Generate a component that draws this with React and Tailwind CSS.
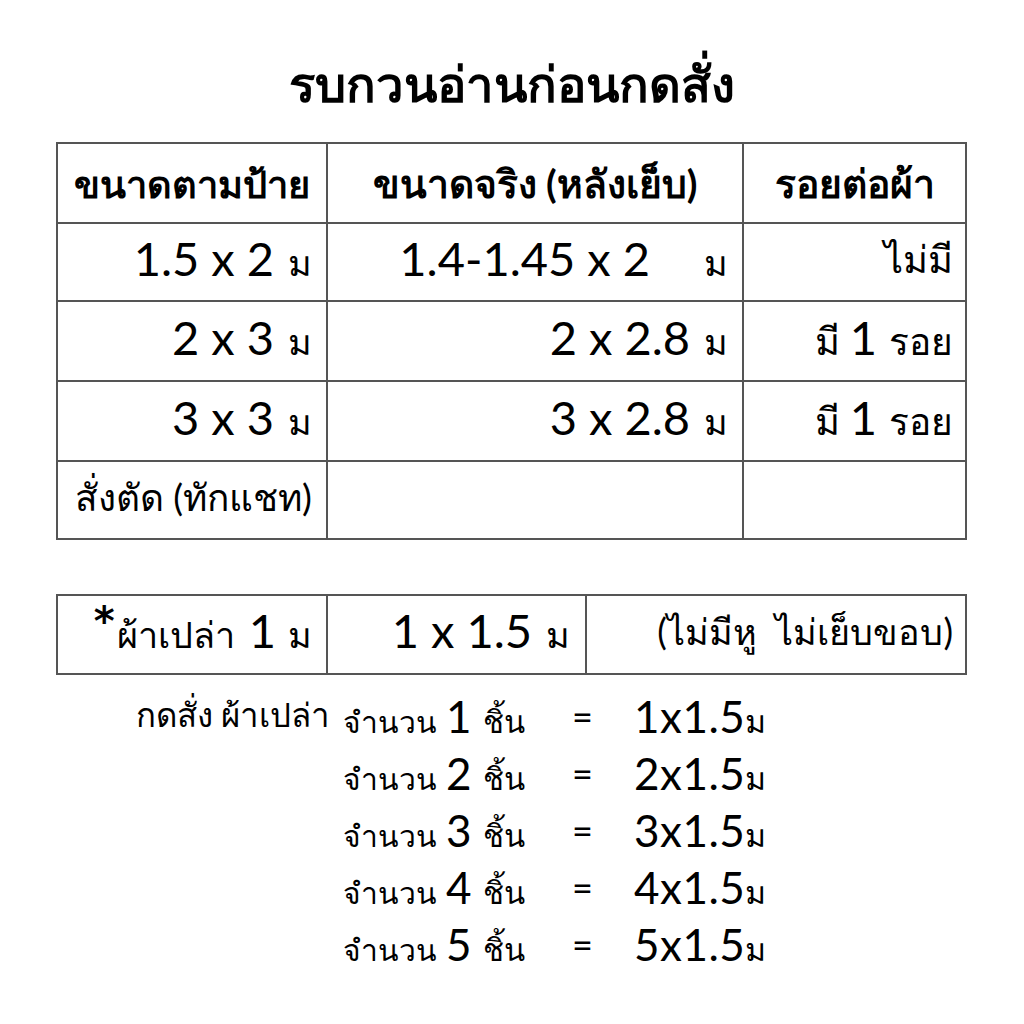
const F = { fontFamily: "Lato, 'Noto Sans', sans-serif" };

function Big({ children, className = "" }) {
  return <span className={"text-[47px] leading-none " + className}>{children}</span>;
}
function Th({ children, className = "" }) {
  return <span className={"leading-none " + className}>{children}</span>;
}

const cell = "border-r-2 border-b-2 border-[#555] flex items-center";
const dcell = cell + " justify-end pb-[8px]";

export default function App() {
  return (
    <div className="w-[1024px] h-[1024px] bg-white text-black pt-[46px]" style={F}>
      <h1 className="h-[74px] flex items-center justify-center text-[49px] font-bold leading-none">
        รบกวนอ่านก่อนกดสั่ง
      </h1>

      {/* Table 1 */}
      <div className="ml-[56px] mt-[22px] w-[911px] border-l-2 border-t-2 border-[#555]">
        <div className="grid grid-cols-[270px_416px_223px] h-[80px]">
          <div className={cell + " justify-center text-[38px] font-bold"}>ขนาดตามป้าย</div>
          <div className={cell + " justify-center text-[39px] font-bold"}>ขนาดจริง (หลังเย็บ)</div>
          <div className={cell + " justify-center text-[39px] font-bold"}>รอยต่อผ้า</div>
        </div>
        <div className="grid grid-cols-[270px_416px_223px] h-[78px]">
          <div className={dcell + " pr-[14px]"}>
            <span className="flex items-baseline gap-[14px]">
              <Big>1.5 x 2</Big>
              <Th className="text-[36px]">ม</Th>
            </span>
          </div>
          <div className={dcell + " pr-[14px]"}>
            <span className="flex items-baseline gap-[54px]">
              <Big>1.4-1.45 x 2</Big>
              <Th className="text-[36px]">ม</Th>
            </span>
          </div>
          <div className={dcell + " pr-[12px]"}>
            <Th className="text-[38px]">ไม่มี</Th>
          </div>
        </div>
        {[
          ["2 x 3", "2 x 2.8"],
          ["3 x 3", "3 x 2.8"],
        ].map(([a, b]) => (
          <div key={a} className="grid grid-cols-[270px_416px_223px] h-[80px]">
            <div className={dcell + " pr-[14px]"}>
              <span className="flex items-baseline gap-[14px]">
                <Big>{a}</Big>
                <Th className="text-[36px]">ม</Th>
              </span>
            </div>
            <div className={dcell + " pr-[14px]"}>
              <span className="flex items-baseline gap-[14px]">
                <Big>{b}</Big>
                <Th className="text-[36px]">ม</Th>
              </span>
            </div>
            <div className={dcell + " pr-[12px]"}>
              <span className="flex items-baseline">
                <Th className="text-[38px]">มี</Th>
                <Big className="ml-[10px]">1</Big>
                <Th className="text-[37px] ml-[12px]">รอย</Th>
              </span>
            </div>
          </div>
        ))}
        <div className="grid grid-cols-[270px_416px_223px] h-[78px]">
          <div className={dcell + " pr-[14px]"}>
            <Th className="text-[37px]">สั่งตัด (ทักแชท)</Th>
          </div>
          <div className={cell} />
          <div className={cell} />
        </div>
      </div>

      {/* Table 2 */}
      <div className="ml-[56px] mt-[54px] w-[911px] border-l-2 border-t-2 border-[#555]">
        <div className="grid grid-cols-[270px_259px_380px] h-[79px]">
          <div className={dcell + " pr-[14px]"}>
            <span className="flex items-baseline">
              <span
                className="text-[40px] font-bold leading-none self-start -mt-[6px] mr-[2px]"
                style={{ fontFamily: "'DejaVu Sans', sans-serif" }}
              >
                *
              </span>
              <Th className="text-[36px]">ผ้าเปล่า</Th>
              <Big className="ml-[14px]">1</Big>
              <Th className="text-[36px] ml-[12px]">ม</Th>
            </span>
          </div>
          <div className={dcell + " pr-[15px]"}>
            <span className="flex items-baseline gap-[14px]">
              <Big>1 x 1.5</Big>
              <Th className="text-[36px]">ม</Th>
            </span>
          </div>
          <div className={dcell + " pr-[12px]"}>
            <Th className="text-[36px] whitespace-pre">(ไม่มีหู  ไม่เย็บขอบ)</Th>
          </div>
        </div>
      </div>

      {/* List */}
      <div className="mt-[12px] flex flex-col">
        {[1, 2, 3, 4, 5].map((n) => (
          <div key={n} className="flex items-center h-[57px]">
            <div className="w-[336px] text-right pr-[6px]">
              {n === 1 && <span className="text-[33px] leading-none">กดสั่ง ผ้าเปล่า</span>}
            </div>
            <div className="w-[236px] pl-[7px] flex items-baseline">
              <span className="text-[30px] leading-none">จำนวน</span>
              <span className="text-[44px] leading-none ml-[9px]">{n}</span>
              <span className="text-[31px] leading-none ml-[11px]">ชิ้น</span>
            </div>
            <div className="w-[62px] text-[36px] leading-none">=</div>
            <div className="flex items-baseline">
              <span className="text-[44px] leading-none tracking-[0.5px]">{n}x1.5</span>
              <span className="text-[32px] leading-none">ม</span>
            </div>
          </div>
        ))}
      </div>
    </div>
  );
}
